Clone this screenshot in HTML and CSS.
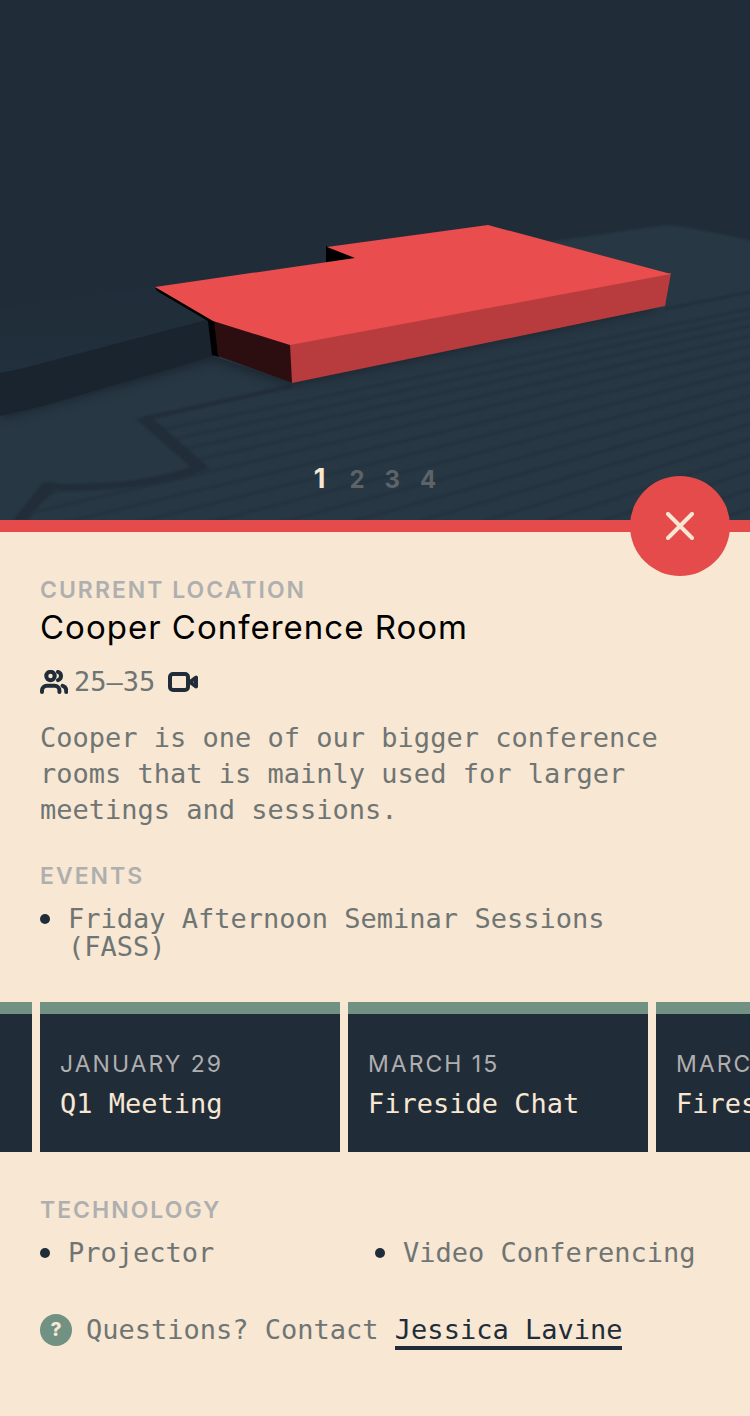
FILE: index.html
```html
<!DOCTYPE html>
<html lang="en">
<head>
<meta charset="utf-8">
<meta name="viewport" content="width=device-width, initial-scale=1">
<title>Cooper Conference Room</title>
<link rel="stylesheet" href="styles.css">
</head>
<body>
<main class="page">
  <header class="hero">
    <svg class="hero-art" viewBox="0 0 750 520" preserveAspectRatio="xMidYMax slice" aria-hidden="true">
      <defs>
        <linearGradient id="roof" x1="0" y1="0" x2="0" y2="1">
          <stop offset="0" stop-color="#212d3a"/>
          <stop offset=".4" stop-color="#202e3a"/>
          <stop offset="1" stop-color="#20303c"/>
        </linearGradient>
        <clipPath id="plaza"><path d="M292 384 137 419 205 468Q170 488 50 487L15 520H750V291L665 307Z"/></clipPath>
        <clipPath id="ground"><path d="M0 416 40 407 213 356 292 382 665 306 671 274 560 240 665 225 750 241V520H0Z"/></clipPath>
        <filter id="soft" x="-20%" y="-20%" width="140%" height="140%" color-interpolation-filters="sRGB"><feGaussianBlur stdDeviation="6"/></filter>
        <filter id="fine" x="-5%" y="-5%" width="110%" height="110%" color-interpolation-filters="sRGB"><feGaussianBlur stdDeviation=".8"/></filter>
      </defs>
      <rect width="750" height="520" fill="#212c39"/>
      <path d="M540 243 665 225Q690 226 770 245V540H-20V400L213 340 500 300Z" fill="#273743" filter="url(#fine)"/>
      <g clip-path="url(#plaza)" filter="url(#fine)">
        <g stroke="#22303d" stroke-width="2" opacity=".8">
          <path d="M0 463 750 309M0 476 750 317M0 489 750 326M0 504 750 336M0 520 750 346M0 538 750 358M0 556 750 370M0 576 750 383M0 598 750 396M0 620 750 410M0 644 750 424M0 670 750 439M0 697 750 455M0 725 750 471M0 754 750 489M0 786 750 508M0 819 750 527"/>
        </g>
      </g>
      <g fill="none" stroke="#222d3a" filter="url(#fine)">
        <path d="M292 386 143 419" stroke-width="4"/>
        <path d="M665 309 760 290" stroke-width="2"/>
      </g>
      <path d="M136 419 151 417 209 468Q165 489 70 491L55 489 32 513 29 520H13L43 483Q48 481 60 484 140 485 191 467L142 424Z" fill="#222d3a" filter="url(#fine)"/>
      <g clip-path="url(#ground)">
        <path d="M0 412 213 353 292 378 655 302" fill="none" stroke="#18212c" stroke-width="11" filter="url(#soft)"/>
      </g>
      <path d="M0 308 155 287 210 321 0 374Z" fill="url(#roof)"/>
      <path d="M0 373 20 369 210 319 214 356 40 407 0 416Z" fill="#1a242e"/>
      <path d="M155 287 210 316 217 322 219 357 212 355 208 321 157 291Z" fill="#000"/>
      <path d="M326 246 356 258 326 263Z" fill="#000"/>
      <path d="M214 320 291 344 293 383 218 356Z" fill="#2c0e10"/>
      <path d="M290 344 671 273 665 306 292 383Z" fill="#b83c3d"/>
      <path d="M155 287 355 258 327 247 488 225 671 274 290 345 213 321Z" fill="#e94d4e"/>
    </svg>
    <nav class="floors" aria-label="Floors">
      <button class="floor floor-active" type="button" aria-current="true">1</button>
      <button class="floor" type="button">2</button>
      <button class="floor" type="button">3</button>
      <button class="floor" type="button">4</button>
    </nav>
    <button class="close" type="button" aria-label="Close">
      <svg class="close-icon" viewBox="0 0 28 28" aria-hidden="true"><path d="M2 2 26 26M26 2 2 26"/></svg>
    </button>
  </header>

  <section class="details">
    <h2 class="label">CURRENT LOCATION</h2>
    <h1 class="title">Cooper Conference Room</h1>
    <div class="facts">
      <svg class="icon-people" viewBox="0 0 28 24" aria-hidden="true"><circle cx="10.5" cy="6" r="4.2"/><path d="M18 1.9a4.3 4.3 0 0 1 0 8.2M2 22v-1.4a4.8 4.8 0 0 1 4.8-4.8h7.8a4.8 4.8 0 0 1 4.8 4.8V22M22.6 15.8c2.4.7 3.6 2.2 3.6 4.8V22"/></svg>
      <span>25–35</span>
      <svg class="icon-video" viewBox="0 0 30 20" aria-hidden="true"><rect x="2" y="2" width="18" height="16" rx="3"/><path d="M22 10 28 5.5v9Z"/></svg>
    </div>
    <p class="about">Cooper is one of our bigger conference rooms that is mainly used for larger meetings and sessions.</p>
    <h2 class="label">EVENTS</h2>
    <ul class="list">
      <li class="item">Friday Afternoon Seminar Sessions (FASS)</li>
    </ul>
  </section>

  <section class="cards" aria-label="Upcoming events">
    <article class="card card-previous"></article>
    <article class="card"><h3 class="date">JANUARY 29</h3><p class="event">Q1 Meeting</p></article>
    <article class="card"><h3 class="date">MARCH 15</h3><p class="event">Fireside Chat</p></article>
    <article class="card"><h3 class="date">MARCH 22</h3><p class="event">Fireside Chat</p></article>
  </section>

  <section class="details">
    <h2 class="label">TECHNOLOGY</h2>
    <ul class="list list-columns">
      <li class="item">Projector</li>
      <li class="item">Video Conferencing</li>
    </ul>
    <p class="contact"><span class="help">?</span><span>Questions? Contact <a class="link" href="#contact">Jessica Lavine</a></span></p>
  </section>
</main>
</body>
</html>
```
FILE: styles.css
```css
* { box-sizing: border-box; }

body {
  margin: 0;
  background: #f8e7d3;
  color: #6f7573;
  font-family: "DejaVu Sans Mono", monospace;
  font-size: 27px;
  line-height: 28px;
}

h1, h2, h3, p, ul { margin: 0; padding: 0; }

button {
  padding: 0;
  border: 0;
  background: none;
  cursor: pointer;
}

.page { padding-bottom: 66px; overflow: hidden; }

.hero {
  position: relative;
  border-bottom: 12px solid #e54b4b;
}

.hero-art { display: block; width: 100%; height: auto; }

.floors {
  position: absolute;
  left: 0;
  right: 0;
  bottom: 24px;
  display: flex;
  justify-content: center;
  align-items: baseline;
  gap: 20px;
}

.floor {
  color: #5c646a;
  font: 700 24px/32px Inter, sans-serif;
}

.floor-active {
  margin-right: 4px;
  color: #f8e7d3;
  font-size: 27px;
}

.close {
  position: absolute;
  right: 20px;
  bottom: -56px;
  display: flex;
  align-items: center;
  justify-content: center;
  width: 100px;
  height: 100px;
  border-radius: 50%;
  background: #e54b4b;
}

.close-icon {
  width: 28px;
  height: 28px;
  fill: none;
  stroke: #f8e7d3;
  stroke-width: 4;
  stroke-linecap: round;
}

.details { padding: 44px 40px 0; }

.label {
  color: #afafaf;
  font: 600 23px/28px Inter, sans-serif;
  letter-spacing: 2px;
}

.title {
  margin-top: 3px;
  color: #000;
  font: 400 33px/40px Inter, sans-serif;
  letter-spacing: 1px;
}

.facts {
  display: flex;
  align-items: center;
  margin-top: 21px;
}

.icon-people, .icon-video {
  fill: none;
  stroke: #212c39;
  stroke-width: 4;
  stroke-linecap: round;
  stroke-linejoin: round;
}

.icon-people { width: 28px; height: 24px; margin-right: 6px; }
.icon-video { width: 30px; height: 20px; margin-left: 13px; }

.about { margin: 24px 0 34px; line-height: 36px; }

.list { margin-top: 15px; list-style: none; }

.list-columns {
  display: grid;
  grid-template-columns: 1fr 1fr;
}

.item { display: flex; gap: 18px; }

.item::before {
  content: "";
  flex: none;
  width: 10px;
  height: 10px;
  margin-top: 9px;
  border-radius: 50%;
  background: #212c39;
}

.cards { display: flex; gap: 8px; margin-top: 41px; }

.card {
  flex: 0 0 300px;
  padding: 36px 20px 34px;
  border-top: 12px solid #719282;
  background: #212c39;
}

.card-previous { flex-basis: 32px; padding: 0; }

.date {
  color: #afafaf;
  font: 400 23px/28px Inter, sans-serif;
  letter-spacing: 2px;
}

.event { margin-top: 12px; color: #f8e7d3; }

.contact {
  display: flex;
  align-items: center;
  gap: 14px;
  margin-top: 47px;
}

.help {
  width: 32px;
  height: 32px;
  border-radius: 50%;
  background: #719282;
  color: #f8e7d3;
  font: 800 19px/32px Inter, sans-serif;
  text-align: center;
}

.link {
  display: inline-block;
  margin-bottom: -6px;
  padding-bottom: 2px;
  border-bottom: 4px solid #212c39;
  color: #212c39;
  text-decoration: none;
}
```
